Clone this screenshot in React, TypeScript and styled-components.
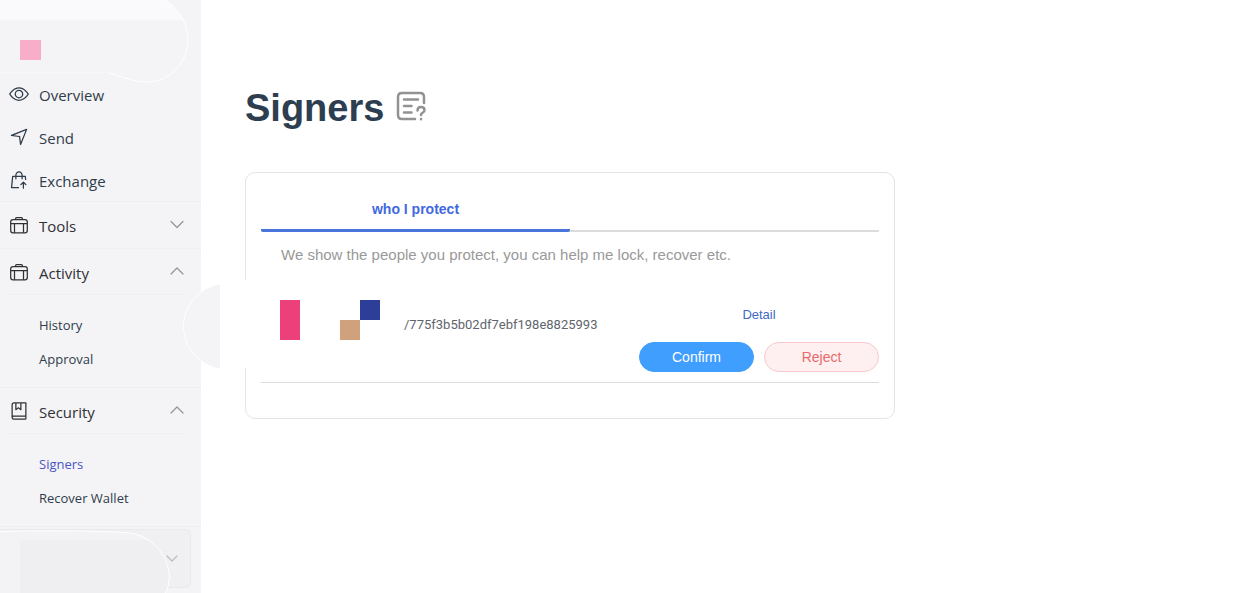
import React from "react";
import styled, { createGlobalStyle } from "styled-components";

const GlobalStyle = createGlobalStyle`
  *, *::before, *::after { box-sizing: border-box; }
  body { margin: 0; background: #fff; color: #2c3e50; font-family: "Liberation Sans", Arial, sans-serif; }
  h1, p, ul { margin: 0; padding: 0; }
  button { font: inherit; cursor: pointer; }
`;

const Page = styled.div`
  display: flex;
  min-height: 100vh;
`;

const Sidebar = styled.aside`
  position: relative;
  display: flex;
  flex-direction: column;
  flex: 0 0 201px;
  background: #f4f4f7;
  font-family: "Open Sans", "Segoe UI", sans-serif;
`;

const Brand = styled.div`
  position: relative;
  height: 72px;
  padding: 40px 20px 0;
`;

const BrandShape = styled.svg`
  position: absolute;
  left: 0;
  top: 0;
`;

const BrandMark = styled.div`
  position: relative;
  width: 21px;
  height: 20px;
  background: #f8adc8;
`;

const NavLink = styled.a`
  position: relative;
  display: flex;
  align-items: center;
  gap: 10px;
  height: 43px;
  padding-left: 9px;
  color: #303c4a;
  font-size: 15px;
  line-height: 20px;
  text-decoration: none;
`;

const NavLabel = styled.span`
  padding-top: 2px;
`;

const Group = styled.section`
  min-height: 47px;
  border-top: 1px solid #eeeef1;
`;

const GroupHead = styled.button`
  display: flex;
  align-items: center;
  gap: 10px;
  width: 100%;
  height: 45px;
  padding: 0 17px 0 9px;
  border: 0;
  background: none;
  color: #303133;
  font-size: 15px;
  line-height: 20px;
  text-align: left;
`;

const GroupLabel = styled.span`
  flex: 1;
  padding-top: 2px;
`;

const SubList = styled.ul`
  margin: 0 16px 0 8px;
  padding: 13px 0 11px 31px;
  border-top: 1px solid #f0f0f3;
  list-style: none;
`;

const SubLink = styled.a<{ $active?: boolean }>`
  display: block;
  color: ${(p) => (p.$active ? "#4a55c4" : "#303c4a")};
  font-size: 13px;
  line-height: 34px;
  text-decoration: none;
`;

const Account = styled.div`
  position: relative;
  height: 67px;
  border-top: 1px solid #eeeef1;
`;

const AccountButton = styled.button`
  display: flex;
  align-items: center;
  justify-content: flex-end;
  width: 191px;
  height: 59px;
  margin-top: 2px;
  padding: 0 12px;
  border: 1px solid #e9e9ec;
  border-left: 0;
  border-radius: 0 6px 6px 0;
  background: #f0f0f2;
`;

const AccountShape = styled.svg`
  position: absolute;
  left: 0;
  top: 2px;
  pointer-events: none;
`;

const Handle = styled.svg`
  position: absolute;
  left: 182px;
  top: 280px;
  z-index: 1;
`;

const Main = styled.main`
  flex: 1;
  min-width: 0;
  padding: 84px 44px 0;
`;

const TitleRow = styled.header`
  display: flex;
  align-items: center;
  gap: 12px;
  height: 48px;
`;

const Title = styled.h1`
  font-size: 38px;
  line-height: 48px;
  font-weight: 700;
`;

const HelpButton = styled.button`
  display: flex;
  padding: 0 0 4px;
  border: 0;
  background: none;
`;

const Card = styled.section`
  max-width: 650px;
  margin-top: 40px;
  padding: 12px 15px 35px;
  border: 1px solid #e4e4e6;
  border-radius: 10px;
`;

const Tabs = styled.div`
  display: grid;
  grid-template-columns: 1fr 1fr;
  height: 47px;
  box-shadow: inset 0 -2px #dcdcde;
`;

const Tab = styled.button`
  padding: 4px 0 0;
  border: 0;
  border-bottom: 3px solid #4874dc;
  border-radius: 2px;
  background: none;
  color: #4169e1;
  font-size: 14px;
  font-weight: 700;
`;

const Hint = styled.p`
  padding: 13px 20px 0;
  color: #999;
  font-size: 15px;
  line-height: 20px;
`;

const SignerRow = styled.div`
  display: flex;
  height: 118px;
  padding-left: 19px;
  border-bottom: 1px solid #dcdcde;
`;

const Avatars = styled.svg`
  flex: none;
  margin-top: 35px;
`;

const Address = styled.span`
  flex: 1;
  padding: 50px 0 0 24px;
  color: #60656d;
  font-family: Roboto, sans-serif;
  font-size: 13px;
  line-height: 20px;
`;

const Actions = styled.div`
  display: flex;
  flex-direction: column;
  justify-content: flex-end;
  gap: 17px;
  width: 240px;
  padding-bottom: 10px;
`;

const DetailLink = styled.a`
  align-self: center;
  color: #4169c8;
  font-size: 13px;
  line-height: 20px;
  text-decoration: none;
`;

const ButtonRow = styled.div`
  display: grid;
  grid-template-columns: 1fr 1fr;
  gap: 10px;
`;

const PillButton = styled.button<{ $danger?: boolean }>`
  height: 30px;
  padding: 0;
  border: 1px solid ${(p) => (p.$danger ? "#f8c8cc" : "#409eff")};
  border-radius: 15px;
  background: ${(p) => (p.$danger ? "#fef0f0" : "#409eff")};
  color: ${(p) => (p.$danger ? "#e86a6a" : "#fff")};
  font-size: 14px;
`;

const iconPaths = {
  view: "M512 160c320 0 512 352 512 352S832 864 512 864 0 512 0 512s192-352 512-352m0 64c-225.28 0-384.128 208.064-436.8 288 52.608 79.872 211.456 288 436.8 288 225.28 0 384.128-208.064 436.8-288-52.608-79.872-211.456-288-436.8-288m0 64a224 224 0 1 1 0 448 224 224 0 0 1 0-448m0 64a160.192 160.192 0 0 0-160 160c0 88.192 71.744 160 160 160s160-71.808 160-160-71.744-160-160-160",
  send: "m249.6 417.088 319.744 43.072 39.168 310.272L845.12 178.88 249.6 417.088zm-129.024 47.168a32 32 0 0 1-7.68-61.44l777.792-311.04a32 32 0 0 1 41.6 41.6l-310.336 775.68a32 32 0 0 1-61.44-7.808L512 516.992l-391.424-52.736z",
  exchange: "M704 288h131.072a32 32 0 0 1 31.808 28.8L886.4 512h-64.384l-16-160H704v96a32 32 0 1 1-64 0v-96H384v96a32 32 0 0 1-64 0v-96H217.92l-51.2 512H512v64H131.328a32 32 0 0 1-31.808-35.2l57.6-576a32 32 0 0 1 31.808-28.8H320v-22.336C320 154.688 405.504 64 512 64s192 90.688 192 201.664v22.4zm-64 0v-22.336C640 189.248 582.272 128 512 128c-70.272 0-128 61.248-128 137.664v22.4h256zm201.408 483.84L768 698.496V928a32 32 0 1 1-64 0V698.496l-73.344 73.344a32 32 0 1 1-45.248-45.248l128-128a32 32 0 0 1 45.248 0l128 128a32 32 0 1 1-45.248 45.248z",
  collection: "M192 736h640V128H256a64 64 0 0 0-64 64zm64-672h608a32 32 0 0 1 32 32v672a32 32 0 0 1-32 32H160l-32 57.536V192A128 128 0 0 1 256 64M240 800a48 48 0 1 0 0 96h592v-96zm0-64h656v160a64 64 0 0 1-64 64H240a112 112 0 0 1 0-224m144-608v250.88l96-76.8 96 76.8V128zm-64-64h320v381.44a32 32 0 0 1-51.968 24.96L480 384l-108.032 86.4A32 32 0 0 1 320 445.44z",
};

const MenuIcon = ({ name }: { name: keyof typeof iconPaths }) => (
  <svg width="20" height="20" viewBox="0 0 1024 1024" fill="currentColor" aria-hidden="true">
    <path d={iconPaths[name]} />
  </svg>
);

const SuitcaseIcon = () => (
  <svg width="20" height="20" viewBox="0 0 20 20" fill="none" stroke="currentColor" strokeWidth="1.25" aria-hidden="true">
    <rect x="1.7" y="4.5" width="16.6" height="13.3" rx="2.3" />
    <path d="M1.7 8.5h16.6M5.5 8.5v9.300M14.5 8.5v9.300M6.600 4.500V3.500q0-1 1-1h4.800q1 0 1 1v1" />
  </svg>
);

const Chevron = ({ up, small }: { up?: boolean; small?: boolean }) => (
  <svg width={small ? 12 : 14} height={small ? 8 : 14} viewBox={small ? "0 0 12 8" : "0 0 14 14"} fill="none" stroke={small ? "#bbbcc0" : "#929397"} strokeWidth="1.2" strokeLinecap="round" strokeLinejoin="round" aria-hidden="true">
    <path d={small ? "M1 1l5 5 5-5" : up ? "M1 9l6-6 6 6" : "M1 3.500l6 6 6-6"} />
  </svg>
);

const links = [
  { label: "Overview", icon: "view" },
  { label: "Send", icon: "send" },
  { label: "Exchange", icon: "exchange" },
] as const;

const groups = [
  { label: "Tools", icon: <SuitcaseIcon />, items: [] as string[] },
  { label: "Activity", icon: <SuitcaseIcon />, items: ["History", "Approval"] },
  { label: "Security", icon: <MenuIcon name="collection" />, items: ["Signers", "Recover Wallet"] },
];

export default function App() {
  return (
    <Page>
      <GlobalStyle />
      <Sidebar>
        <Brand>
          <BrandShape width="201" height="86" viewBox="0 0 201 86" fill="none" aria-hidden="true">
            <path d="M0 0H166Q177 8 183 20H0Z" fill="#fafafc" />
            <path d="M165 0C181 10 188 26 188 41C187 64 169 82 146 82C133 82 121 76 108 73" stroke="#fff" />
            <path d="M0 72.5H108" stroke="#f7f7f9" />
          </BrandShape>
          <BrandMark />
        </Brand>
        <nav>
          {links.map((l) => (
            <NavLink href="#" key={l.label}>
              <MenuIcon name={l.icon} />
              <NavLabel>{l.label}</NavLabel>
            </NavLink>
          ))}
          {groups.map((g) => (
            <Group key={g.label}>
              <GroupHead aria-expanded={g.items.length > 0}>
                {g.icon}
                <GroupLabel>{g.label}</GroupLabel>
                <Chevron up={g.items.length > 0} />
              </GroupHead>
              {g.items.length > 0 && (
                <SubList>
                  {g.items.map((item) => (
                    <li key={item}>
                      <SubLink href="#" $active={item === "Signers"}>{item}</SubLink>
                    </li>
                  ))}
                </SubList>
              )}
            </Group>
          ))}
        </nav>
        <Account>
          <AccountButton aria-label="Account">
            <Chevron small />
          </AccountButton>
          <AccountShape width="180" height="65" viewBox="0 0 180 65" fill="none" aria-hidden="true">
            <path d="M0 2.5C60 1 100 2 130 4C152 7 168 25 169.500 48Q169 58 165 65H0Z" fill="#f3f3f5" />
            <path d="M20 11H152Q168 26 169 48Q169 58 165 65H20Z" fill="#efeff1" />
            <path d="M0 2.500C60 1 100 2 130 4C152 7 168 25 169.500 48Q169 58 165 65" stroke="#fff" />
          </AccountShape>
        </Account>
        <Handle width="66" height="90" viewBox="0 0 66 90" aria-hidden="true">
          <path d="M38 0H66V88H38Z" fill="#fff" />
          <path d="M38 4C18 7 1.500 25 1.500 46C1.500 67 18 86 38 89Z" fill="#f4f4f7" />
          <path d="M38 4C18 7 1.500 25 1.500 46C1.500 67 18 86 38 89" fill="none" stroke="#fff" />
        </Handle>
      </Sidebar>
      <Main>
        <TitleRow>
          <Title>Signers</Title>
          <HelpButton aria-label="About signers">
            <svg width="30" height="30" viewBox="0 0 30 30" fill="none" stroke="#929292" strokeWidth="2.500" strokeLinecap="round" strokeLinejoin="round" aria-hidden="true">
              <path d="M28 12V6q0-4-4-4H6Q2 2 2 6v18q0 4 4 4h13" />
              <path d="M8 8.500h14M8 15h7.500M8 21.500h7.500" />
              <path d="M21.500 19.500q0-3.500 3.500-3.500t3.500 3q0 2-2 2.800-1.500.6-1.500 2.200M25 28v.2" />
            </svg>
          </HelpButton>
        </TitleRow>
        <Card>
          <Tabs role="tablist">
            <Tab role="tab" aria-selected="true">who I protect</Tab>
          </Tabs>
          <Hint>We show the people you protect, you can help me lock, recover etc.</Hint>
          <SignerRow>
            <Avatars width="100" height="40" viewBox="0 0 100 40" aria-hidden="true">
              <path d="M0 0h20v40H0z" fill="#ec407a" />
              <path d="M80 0h20v20H80z" fill="#2c3e98" />
              <path d="M60 20h20v20H60z" fill="#cfa17c" />
            </Avatars>
            <Address>/775f3b5b02df7ebf198e8825993</Address>
            <Actions>
              <DetailLink href="#">Detail</DetailLink>
              <ButtonRow>
                <PillButton>Confirm</PillButton>
                <PillButton $danger>Reject</PillButton>
              </ButtonRow>
            </Actions>
          </SignerRow>
        </Card>
      </Main>
    </Page>
  );
}
